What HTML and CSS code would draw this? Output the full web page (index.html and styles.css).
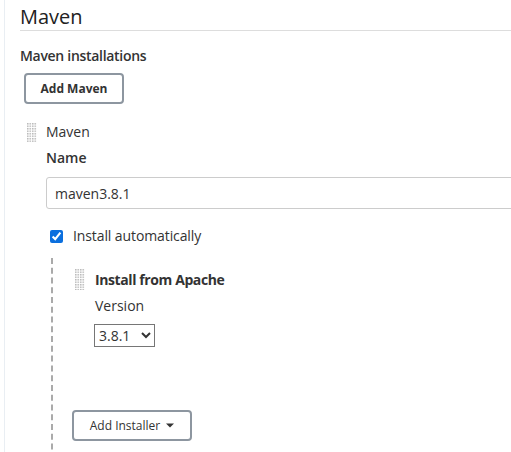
FILE: index.html
```html
<!DOCTYPE html>
<html>
<head>
<meta charset="utf-8">
<link rel="stylesheet" href="styles.css">
</head>
<body>
<div class="page">
  <h2 class="section-title">Maven</h2>
  <div class="label-strong">Maven installations</div>
  <button class="btn btn-add">Add Maven</button>
  <div class="repeated">
    <div class="repeated-head">
      <svg class="handle" width="10" height="19" viewBox="0 0 10 19"><defs><pattern id="dots" width="2.5" height="2.5" patternUnits="userSpaceOnUse"><rect width="1.5" height="1.5" fill="#b8b8b8"/></pattern></defs><rect width="10" height="19" fill="url(#dots)"/></svg>
      <span class="repeated-title">Maven</span>
    </div>
    <div class="repeated-body">
      <div class="field-label">Name</div>
      <input class="text-input" type="text" value="maven3.8.1">
      <label class="check-row"><input type="checkbox" checked class="check"><span>Install automatically</span></label>
      <div class="installers">
        <div class="installer">
          <div class="repeated-head installer-head">
            <svg class="handle" width="10" height="21" viewBox="0 0 10 21"><defs><pattern id="dots2" width="2.5" height="2.5" patternUnits="userSpaceOnUse"><rect width="1.5" height="1.5" fill="#b8b8b8"/></pattern></defs><rect width="10" height="21" fill="url(#dots2)"/></svg>
            <span class="installer-title">Install from Apache</span>
          </div>
          <div class="installer-body">
            <div class="field-label">Version</div>
            <select class="select"><option>3.8.1</option></select>
          </div>
        </div>
        <button class="btn btn-installer">Add Installer <svg class="caret" width="8" height="5" viewBox="0 0 8 5"><path d="M0 0.5H8L4 4.5Z" fill="#333"/></svg></button>
      </div>
    </div>
  </div>
</div>
</body>
</html>
```
FILE: styles.css
```css
html, body { margin: 0; padding: 0; background: #fff; }
body {
  font-family: "Open Sans", "Noto Sans", sans-serif;
  color: #333;
  font-size: 14px;
  overflow: hidden;
}
.page {
  margin-left: 4px;
  border-left: 1px solid #e9eef3;
  padding-left: 15px;
  min-height: 452px;
  box-sizing: border-box;
}
.section-title {
  margin: 0;
  font-size: 20px;
  font-weight: 500;
  line-height: 27px;
  padding-top: 3px;
  border-bottom: 1px solid #ddd;
  color: #222;
}
.label-strong {
  font-weight: 600;
  font-size: 14px;
  line-height: 20px;
  margin-top: 15px;
  letter-spacing: -0.3px;
}
.btn {
  font-family: inherit;
  background: #fff;
  border: 2px solid #8d96a0;
  border-radius: 4px;
  color: #333;
  font-size: 12px;
  height: 31px;
  padding: 0;
}
.btn-add {
  margin: 7px 0 0 4px;
  width: 100px;
  font-weight: 700;
  display: block;
}
.repeated { margin-top: 18px; padding-left: 7px; }
.repeated-head { display: flex; align-items: center; gap: 9px; }
.installer-head { gap: 10px; }
.handle { display: block; }
.repeated-title { font-size: 14px; line-height: 20px; }
.repeated-body { padding-left: 19px; }
.field-label { font-weight: 600; line-height: 20px; margin-top: 6px; }
.text-input {
  display: block;
  margin-top: 9px;
  width: 520px;
  height: 32px;
  box-sizing: border-box;
  border: 1px solid #ccc;
  border-radius: 3px;
  padding: 0 8px;
  font-family: inherit;
  font-size: 14px;
  color: #333;
}
.check-row { display: flex; align-items: center; gap: 10px; margin-top: 17px; margin-left: 4px; font-weight: 500; line-height: 20px; letter-spacing: -0.1px; }
.check { margin: 0; width: 13px; height: 13px; accent-color: #0b6fde; }
.installers {
  margin-top: 12px;
  margin-left: 5px;
  border-left: 2px dashed #aaa;
  padding-left: 22px;
  padding-top: 11px;
  min-height: 200px;
}
.installer-title { font-weight: 700; line-height: 20px; letter-spacing: -0.4px; }
.installer-body { padding-left: 20px; }
.installer-body .field-label { margin-top: 6px; font-weight: 500; }
.select {
  display: block;
  margin-top: 8px;
  margin-left: -1px;
  font-family: inherit;
  font-size: 14px;
  height: 23px;
  width: 61px;
  border: 1px solid #767676;
  border-radius: 0;
  background: #fff;
  color: #333;
}
.btn-installer {
  display: flex;
  align-items: center;
  justify-content: center;
  gap: 6px;
  margin-top: 63px;
  margin-left: -3px;
  width: 120px;
  font-weight: 500;
}
.caret { display: block; }
```
